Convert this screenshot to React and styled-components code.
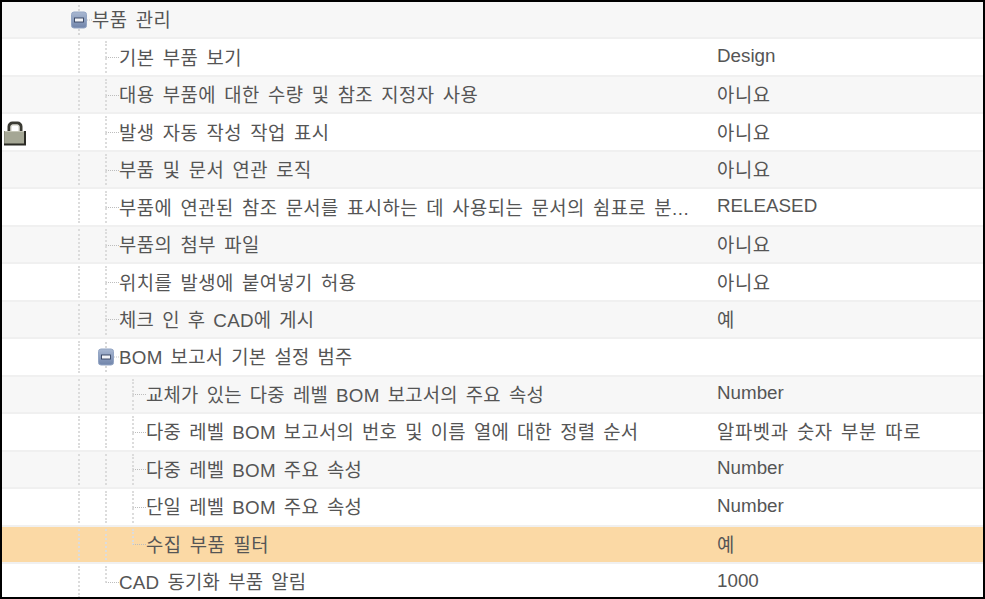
import styled, { createGlobalStyle } from "styled-components";

const GlobalStyle = createGlobalStyle`
  html, body {
    margin: 0;
    padding: 0;
    background: #000;
  }
`;

const rows = [
  { depth: 0, group: true, label: "부품 관리", value: "" },
  { depth: 2, label: "기본 부품 보기", value: "Design" },
  { depth: 2, label: "대용 부품에 대한 수량 및 참조 지정자 사용", value: "아니요" },
  { depth: 2, label: "발생 자동 작성 작업 표시", value: "아니요", locked: true },
  { depth: 2, label: "부품 및 문서 연관 로직", value: "아니요" },
  { depth: 2, label: "부품에 연관된 참조 문서를 표시하는 데 사용되는 문서의 쉼표로 분...", value: "RELEASED" },
  { depth: 2, label: "부품의 첨부 파일", value: "아니요" },
  { depth: 2, label: "위치를 발생에 붙여넣기 허용", value: "아니요" },
  { depth: 2, label: "체크 인 후 CAD에 게시", value: "예" },
  { depth: 1, group: true, label: "BOM 보고서 기본 설정 범주", value: "" },
  { depth: 3, label: "교체가 있는 다중 레벨 BOM 보고서의 주요 속성", value: "Number" },
  { depth: 3, label: "다중 레벨 BOM 보고서의 번호 및 이름 열에 대한 정렬 순서", value: "알파벳과 숫자 부분 따로" },
  { depth: 3, label: "다중 레벨 BOM 주요 속성", value: "Number" },
  { depth: 3, label: "단일 레벨 BOM 주요 속성", value: "Number" },
  { depth: 3, label: "수집 부품 필터", value: "예", last: true, selected: true },
  { depth: 2, label: "CAD 동기화 부품 알림", value: "1000", last: true },
];

const Frame = styled.div`
  box-sizing: border-box;
  width: 985px;
  height: 599px;
  overflow: hidden;
  background: #fff;
  border-style: solid;
  border-color: #000;
  border-width: 2px;
  font-family: "Liberation Sans", "Noto Sans CJK KR", sans-serif;
  font-size: 18.8px;
  word-spacing: 2.6px;
  color: #555;
`;

const Table = styled.div`
  display: flex;
  flex-direction: column;
`;

const Row = styled.div`
  box-sizing: border-box;
  height: 37.47px;
  display: flex;
  align-items: stretch;
  border-bottom: 2px solid #f0f0f0;
  background: ${(p) => (p.$selected ? "#fbd9a5" : p.$odd ? "#fff" : "#f7f7f7")};
`;

const TreeCell = styled.div`
  width: 715px;
  flex: none;
  display: flex;
  align-items: stretch;
`;

const LockSlot = styled.div`
  width: 76px;
  flex: none;
  display: flex;
  align-items: center;
  padding: 2px 0 0 2px;
  box-sizing: border-box;
`;

const Guide = styled.div`
  width: 27px;
  flex: none;
  box-sizing: border-box;
  margin: 2px 0;
  border-left: 2px dotted #dcdcdc;
`;

const Connector = styled.div`
  width: 14px;
  flex: none;
  display: flex;
  flex-direction: column;
  margin-top: 2px;

  &::before {
    content: "";
    height: 50%;
    box-sizing: border-box;
    border-left: 2px dotted #dcdcdc;
    border-bottom: 1px dotted #bdbdbd;
  }

  &::after {
    content: "";
    flex: 1;
    margin-bottom: 2px;
    border-left: ${(p) => (p.$last ? "none" : "2px dotted #dcdcdc")};
  }
`;

const Expander = styled.div`
  width: 21px;
  margin-left: -7px;
  flex: none;
  display: flex;
  align-items: center;
`;

const Label = styled.span`
  align-self: center;
  white-space: nowrap;
  margin-top: -2px;
  letter-spacing: ${(p) => (p.$mixed ? "0.25px" : "0.45px")};
`;

const Value = styled.span`
  align-self: center;
  white-space: nowrap;
  margin-top: -2px;
  letter-spacing: ${(p) => (p.$hangul ? "0.6px" : "0")};
`;

const ExpandIcon = () => (
  <svg width="21" height="34" viewBox="0 0 21 34">
    <defs>
      <linearGradient id="expanderFill" x1="0" y1="0" x2="0" y2="1">
        <stop offset="0" stopColor="#a9b8d2" />
        <stop offset="1" stopColor="#7084aa" />
      </linearGradient>
    </defs>
    <line x1="8" y1="2" x2="8" y2="32" stroke="#d8d8d8" strokeWidth="2" strokeDasharray="2 2" />
    <line x1="16" y1="17" x2="21" y2="17" stroke="#c4c4c4" strokeDasharray="1 1" />
    <rect x="0.5" y="9" width="15" height="16" rx="2.5" fill="url(#expanderFill)" stroke="#93a5c4" />
    <rect x="3.5" y="15" width="9" height="4" fill="#f2f4f8" stroke="#33425f" strokeWidth="0.9" />
  </svg>
);

const LockIcon = () => (
  <svg width="22" height="26" viewBox="0 0 22 26">
    <path d="M5 12V6.5a3.5 3.5 0 0 1 3.5-3.5h5a3.5 3.5 0 0 1 3.5 3.5V12" fill="none" stroke="#3a3a33" strokeWidth="3" />
    <path d="M7 12V7a2 2 0 0 1 2-2h4a2 2 0 0 1 2 2v5" fill="none" stroke="#c9c9bb" strokeWidth="1" />
    <rect x="0" y="11" width="22" height="14" fill="#a5a795" />
    <path d="M0 11.5H22" stroke="#c4c5b6" />
    <path d="M0.5 11V25" stroke="#8d8e7e" />
    <path d="M21 11V25M0 24.5H22" stroke="#2b2b25" strokeWidth="2" />
  </svg>
);

const TreeRow = ({ row, index }) => {
  const guides = row.group ? row.depth : row.depth - 1;

  return (
    <Row $odd={index % 2 === 1} $selected={row.selected}>
      <TreeCell>
        <LockSlot>{row.locked && <LockIcon />}</LockSlot>
        {Array.from({ length: guides }).map((_, i) => (
          <Guide key={i} />
        ))}
        {row.group ? (
          <Expander>
            <ExpandIcon />
          </Expander>
        ) : (
          <Connector $last={row.last} />
        )}
        <Label $mixed={/[A-Z]/.test(row.label)}>{row.label}</Label>
      </TreeCell>
      <Value $hangul={/[가-힣]/.test(row.value)}>{row.value}</Value>
    </Row>
  );
};

export default function App() {
  return (
    <Frame>
      <GlobalStyle />
      <Table>
        {rows.map((row, index) => (
          <TreeRow key={index} row={row} index={index} />
        ))}
      </Table>
    </Frame>
  );
}
